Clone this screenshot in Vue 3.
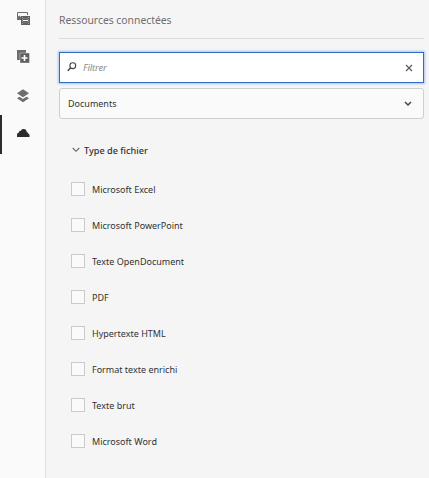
<script setup>
import { ref } from 'vue'

const query = ref('')
const types = [
  'Microsoft Excel',
  'Microsoft PowerPoint',
  'Texte OpenDocument',
  'PDF',
  'Hypertexte HTML',
  'Format texte enrichi',
  'Texte brut',
  'Microsoft Word',
]
</script>

<template>
  <div class="shell">
    <nav class="rail">
      <button class="tab" aria-label="Ressources">
        <svg width="14" height="14" viewBox="0 0 14 14">
          <path d="M1.5 7.5V.5h10V3" fill="none" stroke="#6e6e6e" />
          <path d="M1 8V5.6L3.2 3.4 5 5v3z" fill="#6e6e6e" />
          <rect x="5" y="4" width="9" height="9" fill="#606060" />
          <path d="M7 6.5h5M7 10.5h5" stroke="#777" />
          <path d="M7 8.5h5" stroke="#fff" />
          <path d="M6.5 5v8M12.5 5v8" stroke="#a5a5a5" stroke-dasharray="1 1" />
        </svg>
      </button>
      <button class="tab" aria-label="Composants">
        <svg width="14" height="14" viewBox="0 0 14 14">
          <path d="M1 0h9v3H4v7H1z" fill="#6e6e6e" />
          <rect x="4" y="3" width="9.5" height="10" rx=".5" fill="#606060" stroke="#fafafa" stroke-width=".4" />
          <path d="M8.5 5v6M5.5 8h6" stroke="#fff" stroke-width="1.6" />
        </svg>
      </button>
      <button class="tab" aria-label="Calques">
        <svg width="14" height="14" viewBox="0 0 14 14">
          <path d="M7 .3 13 4.3 7 8.2 1 4.3z" fill="#6e6e6e" />
          <path d="M1 9.3 3.5 7.7 7 10 10.5 7.7 13 9.3 7 13.3z" fill="#6e6e6e" />
        </svg>
      </button>
      <button class="tab active" aria-label="Ressources connectées">
        <svg width="14" height="14" viewBox="0 0 14 14">
          <path d="M1 10V8C1 6.6 1.8 5.7 3 5.6c0-1.2.7-1.9 1.8-1.7C5.3 2.6 6.5 2 7.8 2c1.8 0 2.8 1.1 2.9 2.9.9.1 1.3.7 1.3 1.6 1 .2 1.5.9 1.5 1.8V10z" fill="#2c2c2c" />
        </svg>
      </button>
    </nav>
    <main class="panel">
      <h1><span>Ressources connectées</span></h1>
      <label class="search">
        <svg width="10" height="10" viewBox="0 0 10 10" fill="none" stroke="#444">
          <circle cx="5.8" cy="3.7" r="2.9" stroke-width="1.1" />
          <path d="M3.7 5.8.7 8.8" stroke-width="1.5" />
        </svg>
        <input v-model="query" type="text" placeholder="Filtrer" />
        <svg width="8" height="8" viewBox="0 0 8 8" stroke="#5a5a5a" stroke-width="1.2">
          <path d="m1 1 6 6M7 1 1 7" />
        </svg>
      </label>
      <button class="select">
        <span>Documents</span>
        <svg width="8" height="6" viewBox="0 0 8 6" fill="none" stroke="#444" stroke-width="1.5">
          <path d="m1 1 3 3 3-3" />
        </svg>
      </button>
      <section class="group">
        <h2>
          <svg width="8" height="6" viewBox="0 0 8 6" fill="none" stroke="#666" stroke-width="1.1">
            <path d="m.7 1 3.3 3.3L7.3 1" />
          </svg>
          <span>Type de fichier</span>
        </h2>
        <ul>
          <li v-for="type in types" :key="type">
            <i class="box"></i><span>{{ type }}</span>
          </li>
        </ul>
      </section>
    </main>
  </div>
</template>

<style>
body { background: #f5f5f5; }
</style>

<style scoped>
* { box-sizing: border-box; }
.shell {
  display: flex;
  height: 478px;
  background: #f5f5f5;
  color: #323232;
  font-family: "Noto Sans", "Open Sans", sans-serif;
  font-size: 9.5px;
}
span {
  display: inline-block;
  transform: scaleX(0.947);
  transform-origin: 0 50%;
  white-space: nowrap;
}
.rail {
  display: grid;
  grid-template-rows: 38px 39px 38px 39px;
  flex: none;
  width: 46px;
  background: #fafafa;
  border-right: 1px solid #e0e0e0;
}
.tab {
  display: flex;
  align-items: flex-start;
  width: 45px;
  padding: 12px 0 0 14px;
  border: 0;
  border-left: 2px solid transparent;
  background: none;
}
.tab.active { border-left-color: #2c2c2c; }
.panel { flex: 1; padding: 0 5px 0 13px; }
h1 {
  height: 39px;
  margin: 0 0 13px;
  border-bottom: 1px solid #dedede;
  color: #6e6e6e;
  font-size: 11.5px;
  font-weight: 400;
  line-height: 40px;
}
h1 span { transform: scaleX(0.9); }
.search, .select {
  display: flex;
  align-items: center;
  width: 365px;
  height: 31px;
}
.search {
  padding: 0 10px 0 7px;
  border: 1px solid #2f6cc4;
  background: #fff;
  box-shadow: 0 0 2px 1px #a9c5ee;
}
.search svg:first-child { margin-bottom: 1px; }
input {
  flex: 1;
  min-width: 0;
  padding: 0 0 0 6px;
  border: 0;
  outline: 0;
  font: inherit;
}
input::placeholder {
  color: #8a8a8a;
  font-style: italic;
  letter-spacing: -0.15px;
}
.select {
  justify-content: space-between;
  margin-top: 5px;
  padding: 0 11px 0 7.5px;
  border: 1px solid #cfcfcf;
  border-radius: 3px;
  background: #fafafa;
  color: #323232;
  font: inherit;
}
.group { padding: 24px 0 0 12px; }
h2 {
  display: flex;
  align-items: center;
  gap: 4px;
  height: 14px;
  margin: 0 0 14px;
  padding-left: 1px;
  font-size: 9.5px;
  font-weight: 500;
}
h2 span { transform: scaleX(0.96); }
ul { margin: 0; padding: 0; list-style: none; }
li {
  display: flex;
  align-items: center;
  gap: 6.5px;
  height: 36px;
}
.box {
  width: 14px;
  height: 14px;
  border: 1px solid #cbcbcb;
  background: #fafafa;
}
</style>
